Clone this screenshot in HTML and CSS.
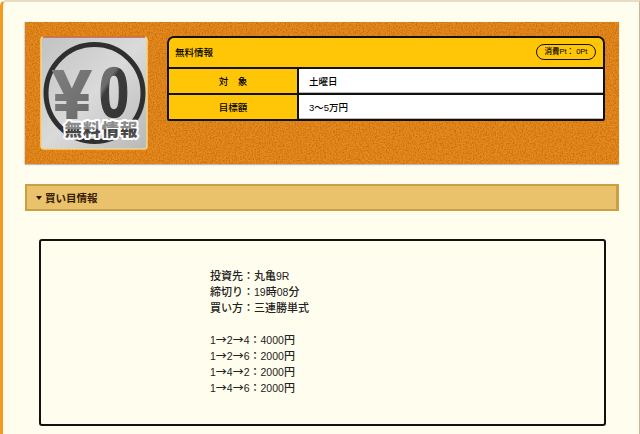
FILE: index.html
```html
<!DOCTYPE html>
<html lang="ja">
<head>
<meta charset="utf-8">
<title>無料情報</title>
<link rel="stylesheet" href="styles.css">
</head>
<body>
<div class="page">
  <section class="hero">
    <svg class="grain" aria-hidden="true"><filter id="gr" color-interpolation-filters="sRGB"><feTurbulence type="fractalNoise" baseFrequency="0.7" numOctaves="2" seed="4"/><feColorMatrix values="0 0 0 0 0.72  0 0 0 0 0.36  0 0 0 0 0.02  1.600 0 0 0 -0.6"/></filter><rect width="100%" height="100%" filter="url(#gr)"/></svg>
    <svg class="badge" viewBox="0 0 108 114" width="108" height="114">
      <defs>
        <linearGradient id="bg" x1="0" y1="0" x2="1" y2="1"><stop offset="0" stop-color="#c2c2c2"/><stop offset=".5" stop-color="#dadada"/><stop offset="1" stop-color="#b8b8b8"/></linearGradient>
        <linearGradient id="num" gradientUnits="userSpaceOnUse" x1="10" y1="30" x2="95" y2="85"><stop offset="0" stop-color="#808080"/><stop offset=".56" stop-color="#6c6c6c"/><stop offset=".6" stop-color="#3c3c3c"/><stop offset="1" stop-color="#333"/></linearGradient>
        <linearGradient id="lab" x1="0" y1="0" x2="0" y2="1"><stop offset="0" stop-color="#999"/><stop offset=".5" stop-color="#888"/><stop offset=".55" stop-color="#3c3c3c"/><stop offset="1" stop-color="#666"/></linearGradient>
      </defs>
      <rect x="1" y="1" width="106" height="112" rx="3" fill="url(#bg)" stroke="#f4d284" stroke-width="1.600"/>
      <path d="M3 1H105" stroke="#a52a1a" stroke-width="1"/>
      <circle cx="54.500" cy="57" r="48.500" fill="none" stroke="#2f2f2f" stroke-width="5"/>
      <text class="yen" x="32" y="82" text-anchor="middle">¥</text>
      <text class="zero" x="74" y="81" text-anchor="middle" textLength="30" lengthAdjust="spacingAndGlyphs">0</text>
      <text class="label" x="61.500" y="100" text-anchor="middle">無料情報</text>
    </svg>
    <div class="info">
      <div class="info-head">
        <span>無料情報</span>
        <span class="pill">消費Pt： 0Pt</span>
      </div>
      <div class="info-row">
        <div class="info-key">対　象</div>
        <div class="info-val">土曜日</div>
      </div>
      <div class="info-row">
        <div class="info-key">目標額</div>
        <div class="info-val">3〜5万円</div>
      </div>
    </div>
  </section>
  <h2 class="bar"><span class="caret"></span>買い目情報</h2>
  <section class="box">
    <p>投資先：丸亀<span class="num">9R</span></p>
    <p>締切り：<span class="num">19</span>時<span class="num">08</span>分</p>
    <p>買い方：三連勝単式</p>
    <p class="blank">&nbsp;</p>
    <p><span class="num">1</span>→<span class="num">2</span>→<span class="num">4</span>：<span class="num">4000</span>円</p>
    <p><span class="num">1</span>→<span class="num">2</span>→<span class="num">6</span>：<span class="num">2000</span>円</p>
    <p><span class="num">1</span>→<span class="num">4</span>→<span class="num">2</span>：<span class="num">2000</span>円</p>
    <p><span class="num">1</span>→<span class="num">4</span>→<span class="num">6</span>：<span class="num">2000</span>円</p>
  </section>
</div>
</body>
</html>
```
FILE: styles.css
```css
* { box-sizing: border-box; }
html, body { margin: 0; height: 100%; }
body {
  height: 434px;
  overflow: hidden;
  background: #fffeee;
  font-family: "Liberation Sans", "Noto Sans CJK JP", sans-serif;
  color: #111;
}
.page {
  height: 446px;
  padding: 20px 20px 0 22px;
  background: #fffeee;
  border: solid #c9b79a;
  border-width: 2px 1px 0 0;
  border-left: 3px solid #f29c1f;
  border-top-color: #e8dcc2;
  border-top-left-radius: 6px;
}
.hero {
  position: relative;
  display: flex;
  align-items: flex-start;
  gap: 19px;
  height: 142px;
  padding: 14px 14px 0 15px;
  background: #e68c1e;
  box-shadow: 0 1px 1px #bbb, -1px 0 1px #ddd;
}
.grain { position: absolute; inset: 0; width: 100%; height: 100%; }
.badge { position: relative; flex: none; }
.yen {
  font: 700 68px "Liberation Sans", sans-serif;
  fill: url(#num);
  stroke: url(#num);
  stroke-width: 2px;
}
.zero {
  font: 700 70px "Liberation Sans", sans-serif;
  fill: url(#num);
  stroke: url(#num);
  stroke-width: 1.500px;
}
.label {
  font: 900 17.500px "Noto Sans CJK JP", sans-serif;
  fill: url(#lab);
  stroke: #fff;
  stroke-width: 4px;
  paint-order: stroke;
  stroke-linejoin: round;
  letter-spacing: 1px;
}
.info {
  position: relative;
  width: 438px;
  font-size: 9.500px;
  font-weight: 500;
  color: #000;
  background: #111;
  border: 2px solid #111;
  border-radius: 7px 7px 2px 2px;
  overflow: hidden;
  display: flex;
  flex-direction: column;
  gap: 2px;
}
.info-head {
  display: flex;
  align-items: center;
  justify-content: space-between;
  height: 29px;
  padding: 0 7px 1px 6px;
  background: #ffc507;
}
.pill {
  width: 60px;
  text-align: center;
  font-size: 7.500px;
  line-height: 13px;
  height: 16px;
  border: 1.500px solid #111;
  border-radius: 8px;
}
.info-row { display: flex; height: 24px; gap: 2px; }
.info-key {
  flex: none;
  width: 128px;
  display: flex;
  align-items: center;
  justify-content: center;
  background: #ffc507;
}
.info-val {
  flex: 1;
  display: flex;
  align-items: center;
  padding-left: 10px;
  background: #fff;
  box-shadow: inset 0 -1px 0 #bbb;
}
.bar {
  display: flex;
  align-items: center;
  height: 27px;
  margin: 20px 0 28px;
  padding-left: 9px;
  font-size: 10.500px;
  font-weight: 700;
  color: #3a1d05;
  background: #e9c26b;
  border: 2px solid #c9a044;
  border-right-width: 3px;
}
.caret {
  width: 0;
  height: 0;
  margin-right: 3px;
  border: solid transparent;
  border-width: 4px 3.500px 0;
  border-top-color: #2a1505;
}
.box {
  height: 187px;
  margin: 0 13px 0 14px;
  padding: 26px 0 0 169px;
  background: #fffeee;
  border: 2px solid #111;
  border-radius: 3px;
  font-family: "Noto Sans CJK JP", "Liberation Sans", sans-serif;
  font-size: 11px;
  font-weight: 500;
  line-height: 16px;
  color: #222;
}
.box p { margin: 0; height: 16px; }
.num { font-family: "Liberation Sans", sans-serif; font-size: 10.500px; }
```
